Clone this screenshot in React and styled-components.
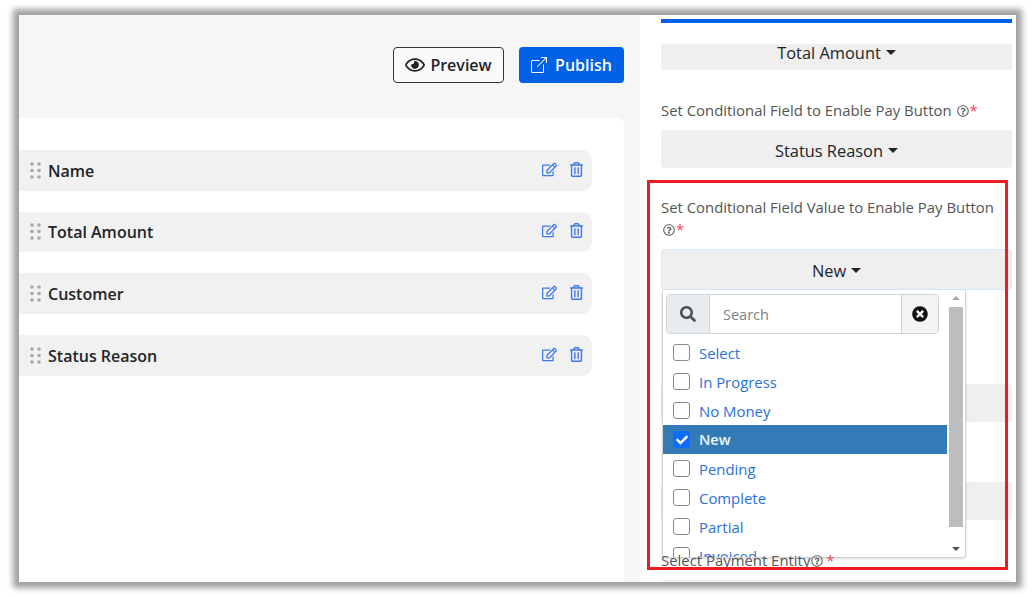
import React from 'react'
import styled, { createGlobalStyle } from 'styled-components'
import { FaRegEye, FaRegEdit, FaRegTrashAlt, FaSearch, FaTimesCircle, FaCheck, FaRegQuestionCircle } from 'react-icons/fa'
import { BsBoxArrowUpRight } from 'react-icons/bs'

const GlobalStyle = createGlobalStyle`
  html, body {
    margin: 0;
    padding: 0;
    background: #fff;
    font-family: "Open Sans", "Liberation Sans", sans-serif;
    color: #212529;
  }
  * { box-sizing: border-box; }
`

const Page = styled.div`
  width: 1036px;
  height: 597px;
  padding: 15px 20px 15px 19px;
  overflow: hidden;
`

const Frame = styled.div`
  display: flex;
  width: 997px;
  height: 567px;
  background: #fff;
  box-shadow: 0 0 6px 6px #a0a0a0;
  overflow: hidden;
`

const Main = styled.div`
  width: 621px;
  padding-right: 16px;
  background: #f6f6f6;
  display: flex;
  flex-direction: column;
`

const Toolbar = styled.div`
  height: 103px;
  padding-top: 32px;
  display: flex;
  justify-content: flex-end;
  align-items: flex-start;
  gap: 15px;
`

const ToolButton = styled.button`
  height: 36px;
  width: ${(p) => p.$width}px;
  display: flex;
  align-items: center;
  justify-content: center;
  gap: ${(p) => (p.$primary ? 8 : 5)}px;
  font-family: inherit;
  font-size: 16px;
  font-weight: 600;
  border-radius: 4px;
  color: ${(p) => (p.$primary ? '#fff' : '#212529')};
  background: ${(p) => (p.$primary ? '#0060e6' : '#fafafa')};
  border: ${(p) => (p.$primary ? 'none' : '1.5px solid #333')};
`

const Card = styled.div`
  flex: 1;
  background: #fff;
  border-top-right-radius: 6px;
  padding: 32px 32px 0 0;
  display: flex;
  flex-direction: column;
  gap: 21.2px;
`

const Row = styled.div`
  height: 40.5px;
  background: #f1f1f1;
  border-radius: 0 10px 10px 0;
  display: flex;
  align-items: center;
  padding: 0 8px 0 11px;
`

const RowName = styled.span`
  flex: 1;
  margin: 1px 0 0 7px;
  font-size: 16px;
  font-weight: 600;
  color: #212529;
`

const RowIcons = styled.div`
  display: flex;
  align-items: center;
  gap: 12px;
  color: #3f78ea;
  font-size: 15px;
  line-height: 0;
  margin-top: -2px;
`

const Panel = styled.div`
  position: relative;
  width: 376px;
  background: #fff;
  padding: 4px 4px 0 21px;
`

const BlueBar = styled.div`
  height: 4px;
  margin-bottom: 21px;
  background: #0060e6;
`

const Field = styled.div`
  position: relative;
  margin-top: ${(p) => p.$top ?? 30}px;
`

const Label = styled.div`
  position: relative;
  z-index: 3;
  font-size: 14.9px;
  line-height: 22px;
  margin: -1px 0 9px;
  color: #555;
  svg {
    font-size: 12px;
    vertical-align: -1px;
    margin-left: ${(p) => p.$iconGap ?? 5}px;
    color: #666;
  }
`

const Star = styled.span`
  margin-left: ${(p) => p.$gap ?? 1}px;
  color: #f0455a;
`

const Select = styled.div`
  height: ${(p) => p.$height ?? 38}px;
  padding: 2px 0 ${(p) => p.$lift ?? 0}px;
  display: flex;
  align-items: center;
  justify-content: center;
  gap: 5px;
  background: #efefef;
  border-radius: ${(p) => (p.$clipped ? '0 0 4px 4px' : '4px')};
  border: ${(p) => (p.$focus ? '1px solid #d6e8fb' : 'none')};
  font-size: 16.4px;
  font-weight: 500;
  color: #212529;
`

const Caret = styled.span`
  width: 0;
  height: 0;
  border-left: 5px solid transparent;
  border-right: 5px solid transparent;
  border-top: 5px solid #212529;
`

const Menu = styled.div`
  position: absolute;
  z-index: 2;
  top: 100%;
  left: 1px;
  width: 304px;
  height: 268px;
  display: flex;
  background: #fff;
  border: 1px solid #d4d4d4;
  border-top: none;
  border-radius: 0 0 4px 4px;
  box-shadow: 0 1px 3px rgba(0, 0, 0, 0.15);
  overflow: hidden;
`

const MenuBody = styled.div`
  width: 285px;
  margin-left: -1px;
  padding-top: 4px;
`

const SearchGroup = styled.div`
  display: flex;
  height: 40px;
  width: 273px;
  margin: 0 0 4px 4px;
  border: 1px solid #ced4da;
  border-radius: 4px;
  overflow: hidden;
`

const SearchAddon = styled.div`
  width: 43px;
  display: flex;
  align-items: center;
  justify-content: center;
  background: #e9ecef;
  border-right: 1px solid #ced4da;
  color: #495057;
  font-size: 16px;
`

const SearchInput = styled.div`
  flex: 1;
  padding-left: 13px;
  display: flex;
  align-items: center;
  font-size: 14.5px;
  color: #7a8288;
`

const ClearButton = styled.div`
  width: 37px;
  display: flex;
  align-items: center;
  justify-content: center;
  background: #f4f4f4;
  border-left: 1px solid #ced4da;
  color: #111;
  font-size: 16px;
`

const Option = styled.div`
  height: 29px;
  display: flex;
  align-items: center;
  gap: 9px;
  padding-left: 11px;
  font-size: ${(p) => (p.$active ? 14.5 : 14.9)}px;
  font-weight: ${(p) => (p.$active ? 600 : 400)};
  color: ${(p) => (p.$active ? '#f2f6fa' : '#2a72dc')};
  background: ${(p) => (p.$active ? '#337ab7' : 'transparent')};
`

const Check = styled.span`
  width: 17px;
  height: 17px;
  display: flex;
  align-items: center;
  justify-content: center;
  border-radius: 3px;
  border: ${(p) => (p.$checked ? 'none' : '1.5px solid #8a8a8a')};
  background: ${(p) => (p.$checked ? '#0d6efd' : '#fff')};
  color: #fff;
  font-size: 12px;
`

const Scrollbar = styled.div`
  flex: 1;
  display: flex;
  flex-direction: column;
  align-items: center;
  padding: 0 2px;
`

const ArrowBox = styled.div`
  height: 17px;
  display: flex;
  align-items: center;
  justify-content: center;
`

const Arrow = styled.span`
  width: 0;
  height: 0;
  border-left: 4px solid transparent;
  border-right: 4px solid transparent;
  border-top: ${(p) => (p.$up ? 'none' : '4px solid #505050')};
  border-bottom: ${(p) => (p.$up ? '4px solid #a8a8a8' : 'none')};
`

const Thumb = styled.div`
  width: 14px;
  height: 221px;
  margin-bottom: 13px;
  background: #bdbdbd;
`

const Anchor = styled.div`
  position: relative;
`

const Annotation = styled.div`
  position: absolute;
  z-index: 4;
  top: 165px;
  left: 7px;
  width: 361px;
  height: 390px;
  border: 3px solid #ed1c24;
  pointer-events: none;
`

const Grip = () => (
  <svg width="11" height="17" viewBox="0 0 11 17" fill="#a8a8a8">
    {[2, 8.5, 15].map((cy) => (
      <g key={cy}>
        <circle cx="2" cy={cy} r="1.8" />
        <circle cx="9" cy={cy} r="1.8" />
      </g>
    ))}
  </svg>
)

const fields = ['Name', 'Total Amount', 'Customer', 'Status Reason']
const options = ['Select', 'In Progress', 'No Money', 'New', 'Pending', 'Complete', 'Partial', 'Invoiced']

export default function App() {
  return (
    <Page>
      <GlobalStyle />
      <Frame>
        <Main>
          <Toolbar>
            <ToolButton $width={111}>
              <FaRegEye size={20} /> Preview
            </ToolButton>
            <ToolButton $width={105} $primary>
              <BsBoxArrowUpRight size={16} /> Publish
            </ToolButton>
          </Toolbar>
          <Card>
            {fields.map((name) => (
              <Row key={name}>
                <Grip />
                <RowName>{name}</RowName>
                <RowIcons>
                  <FaRegEdit />
                  <FaRegTrashAlt />
                </RowIcons>
              </Row>
            ))}
          </Card>
        </Main>
        <Panel>
          <BlueBar />
          <Select $clipped $height={26} $lift={12}>
            Total Amount <Caret />
          </Select>
          <Field>
            <Label>
              Set Conditional Field to Enable Pay Button
              <FaRegQuestionCircle />
              <Star>*</Star>
            </Label>
            <Select>
              Status Reason <Caret />
            </Select>
          </Field>
          <Field $top={29}>
            <Label $iconGap={2}>
              Set Conditional Field Value to Enable Pay Button
              <br />
              <FaRegQuestionCircle />
              <Star>*</Star>
            </Label>
            <Anchor>
              <Select $focus $height={41}>
                New <Caret />
              </Select>
              <Menu>
                <MenuBody>
                  <SearchGroup>
                    <SearchAddon>
                      <FaSearch />
                    </SearchAddon>
                    <SearchInput>Search</SearchInput>
                    <ClearButton>
                      <FaTimesCircle />
                    </ClearButton>
                  </SearchGroup>
                  {options.map((o) => (
                    <Option key={o} $active={o === 'New'}>
                      <Check $checked={o === 'New'}>{o === 'New' && <FaCheck />}</Check>
                      {o}
                    </Option>
                  ))}
                </MenuBody>
                <Scrollbar>
                  <ArrowBox>
                    <Arrow $up />
                  </ArrowBox>
                  <Thumb />
                  <ArrowBox>
                    <Arrow />
                  </ArrowBox>
                </Scrollbar>
              </Menu>
            </Anchor>
          </Field>
          <Field $top={94}>
            <Select />
          </Field>
          <Field $top={60}>
            <Select />
          </Field>
          <Field>
            <Label $iconGap={1}>
              Select Payment Entity
              <FaRegQuestionCircle />
              <Star $gap={3}>*</Star>
            </Label>
            <Select />
          </Field>
          <Annotation />
        </Panel>
      </Frame>
    </Page>
  )
}
